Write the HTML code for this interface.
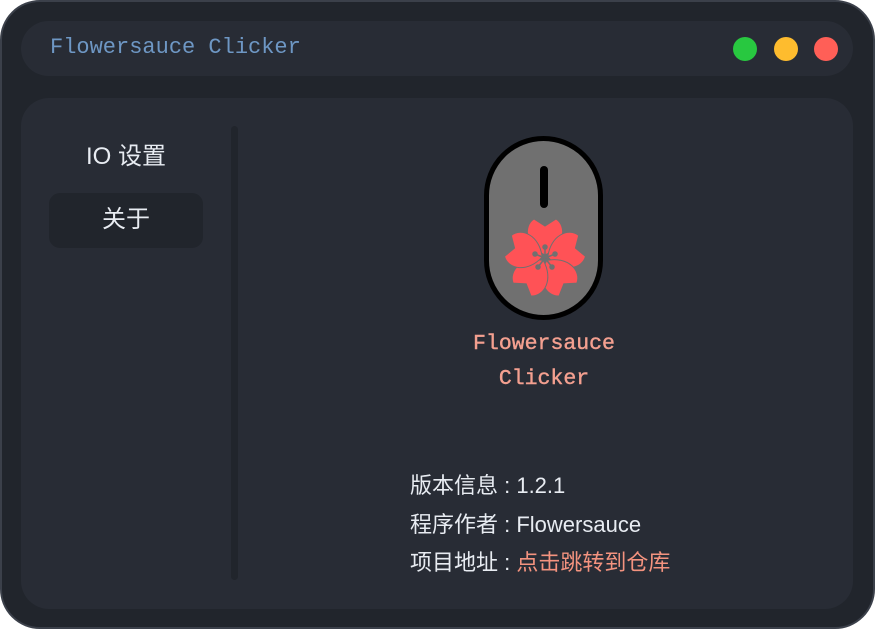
<!DOCTYPE html>
<html><head><meta charset="utf-8"><style>
html,body{margin:0;padding:0;background:#fff;width:875px;height:630px;overflow:hidden}
.win{position:absolute;left:0;top:0;width:871px;height:625px;border:2px solid #3b404a;border-radius:40px;background:#21252c}
.title{position:absolute;left:19px;top:19px;width:832px;height:55px;border-radius:28px;background:#282c35}
.title span{position:absolute;left:29px;top:14px;font:22px "Liberation Mono",monospace;color:#6e97c4;white-space:pre}
.dot{position:absolute;top:16px;width:24px;height:24px;border-radius:50%}
.main{position:absolute;left:19px;top:96px;width:832px;height:511px;border-radius:28px;background:#282c35}
.cjk{font-family:"Liberation Sans","Noto Sans CJK SC",sans-serif}
.side{position:absolute;left:210px;top:28px;width:7px;height:454px;border-radius:4px;background:#21252c}
.io{position:absolute;left:0;width:210px;top:38px;text-align:center;font-size:24px;color:#e8ecf2}
.btn{position:absolute;left:28px;top:95px;width:154px;height:55px;border-radius:11px;background:#21252c;text-align:center;line-height:53px;font-size:24px;color:#e8ecf2}
.name{position:absolute;left:398px;width:250px;top:229px;text-align:center;font:21.5px/35px "Liberation Mono",monospace;color:#f4a090;-webkit-text-stroke:0.4px #f4a090}
.info{position:absolute;left:389px;top:369px;font-size:22px;line-height:38.5px;color:#e8ecf2;white-space:nowrap}
.info .l{color:#f4937f}
</style></head><body>
<div class="win">
<div class="title"><span>Flowersauce Clicker</span>
<div class="dot" style="left:712px;background:#28c840"></div>
<div class="dot" style="left:753px;background:#febc2e"></div>
<div class="dot" style="left:793px;background:#ff5f57"></div>
</div>
<div class="main cjk">
<div class="io">IO 设置</div>
<div class="btn">关于</div>
<div class="side"></div>
<svg style="position:absolute;left:462px;top:37px" width="125" height="186" viewBox="0 0 125 186">
<rect x="3.5" y="3.5" width="114" height="179" rx="57" fill="#707070" stroke="#000" stroke-width="5"/>
<rect x="57" y="31" width="8" height="42" rx="4" fill="#000"/>
<g transform="translate(62,123)" fill="#ff5256" stroke="#707070" stroke-width="1">
<path d="M0,-3 C-20,-12 -22,-32 -11,-39 L0,-32 L11,-39 C22,-32 20,-12 0,-3Z"/>
<path transform="rotate(72)" d="M0,-3 C-20,-12 -22,-32 -11,-39 L0,-32 L11,-39 C22,-32 20,-12 0,-3Z"/>
<path transform="rotate(144)" d="M0,-3 C-20,-12 -22,-32 -11,-39 L0,-32 L11,-39 C22,-32 20,-12 0,-3Z"/>
<path transform="rotate(216)" d="M0,-3 C-20,-12 -22,-32 -11,-39 L0,-32 L11,-39 C22,-32 20,-12 0,-3Z"/>
<path transform="rotate(288)" d="M0,-3 C-20,-12 -22,-32 -11,-39 L0,-32 L11,-39 C22,-32 20,-12 0,-3Z"/>
<g stroke="#707070" stroke-width="1.5" fill="#707070">
<line x1="0" y1="0" x2="0" y2="-11"/><circle cx="0" cy="-11" r="2"/>
<line x1="0" y1="0" x2="10" y2="-4"/><circle cx="10" cy="-4" r="2"/>
<line x1="0" y1="0" x2="7" y2="9"/><circle cx="7" cy="9" r="2"/>
<line x1="0" y1="0" x2="-7" y2="9"/><circle cx="-7" cy="9" r="2"/>
<line x1="0" y1="0" x2="-10" y2="-4"/><circle cx="-10" cy="-4" r="2"/>
</g></g>
</svg>
<div class="name">Flowersauce<br>Clicker</div>
<div class="info">版本信息 : 1.2.1<br>程序作者 : Flowersauce<br>项目地址 : <span class="l">点击跳转到仓库</span></div>
</div>
</div>
</body></html>
